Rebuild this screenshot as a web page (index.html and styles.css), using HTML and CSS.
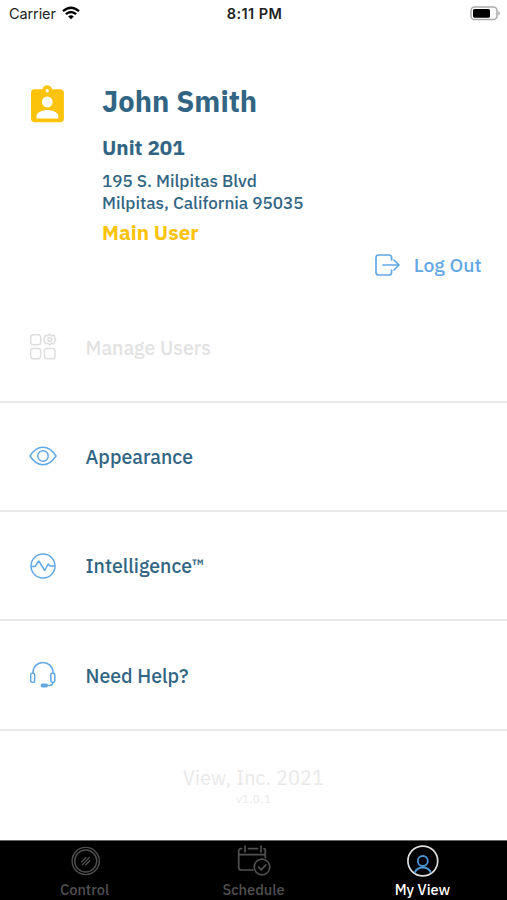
FILE: index.html
```html
<!DOCTYPE html>
<html lang="en">
<head>
<meta charset="utf-8">
<title>My View</title>
<link rel="stylesheet" href="styles.css">
</head>
<body>
<div class="app">
  <header class="status">
    <div class="carrier"><span>Carrier</span>
      <svg width="18" height="14" viewBox="0 0 18 14" fill="none" stroke="#000" stroke-width="2.4"><path d="M1 5.2Q9-1.7 17 5.2M3.900 8.200Q9 3.800 14.100 8.200"/><path d="M6.200 10.400Q9 8.100 11.800 10.400L9 13.200Z" fill="#000" stroke="none"/></svg>
    </div>
    <div class="time">8:11 PM</div>
    <svg class="battery" width="31" height="15" viewBox="0 0 31 15"><rect x="2" y="1" width="26" height="12.600" rx="3.600" fill="#fff" stroke="#aaa" stroke-width="1.500"/><rect x="4" y="3" width="17" height="8.700" rx="1.600"/><path d="M29.300 5v4.600q1.600-.8 1.600-2.300T29.300 5z" fill="#aaa"/></svg>
  </header>

  <section class="profile">
    <svg class="badge" width="33" height="38" viewBox="0 0 34 38" preserveAspectRatio="none"><path fill="#fcc30b" fill-rule="evenodd" d="M3.600 4.200h8.200C12.600 1.700 14.400.3 16.800.3s4.200 1.400 5 3.900h8.500c2 0 3.600 1.500 3.600 3.500v26c0 2-1.600 3.600-3.600 3.600H3.600c-2 0-3.600-1.600-3.600-3.600v-26c0-2 1.600-3.500 3.600-3.500zM16.800 4a1.700 1.700 0 1 0 0 3.400 1.700 1.700 0 0 0 0-3.400zM16.800 11.400a5.500 5.500 0 1 0 0 11 5.500 5.500 0 0 0 0-11zM5.700 33.400h22.400v-2.400c0-4-7.400-6-11.200-6s-11.200 2-11.200 6z"/></svg>
    <div class="details">
      <h1>John Smith</h1>
      <h2>Unit 201</h2>
      <p class="address">195 S. Milpitas Blvd<br>Milpitas, California 95035</p>
      <p class="role">Main User</p>
    </div>
  </section>
  <a class="logout">
    <svg width="26" height="22" viewBox="0 0 26 22" fill="none" stroke="#62a8e5" stroke-width="1.700" stroke-linecap="round" stroke-linejoin="round"><path d="M16.600 6V3.800Q16.600 1 13.800 1H3.800Q1 1 1 3.800v14.400Q1 21 3.800 21h10q2.800 0 2.800-2.800V16M8 11h16M19 6l5 5-5 5"/></svg>
    <span>Log Out</span>
  </a>

  <nav class="menu">
    <a class="row disabled">
      <svg class="icon" viewBox="0 0 28 28"><rect x="1.700" y="1.700" width="10" height="10" rx="2.600"/><rect x="1.700" y="15.400" width="10" height="10.300" rx="2.600"/><rect x="15.400" y="15.400" width="10.600" height="10.300" rx="2.600"/><path d="M20.700 1.100l1.800 1.700 2.500-.5.700 2.300 1 1.900-1 1.900-.7 2.300-2.500-.5-1.800 1.700-1.800-1.700-2.500.5-.7-2.300-1-1.900 1-1.900.7-2.300 2.500.5z"/><circle cx="20.700" cy="6.500" r="1.900"/></svg>
      <span>Manage Users</span>
    </a>
    <a class="row">
      <svg class="icon" viewBox="0 0 28 28"><path d="M1 14Q6.500 5.300 14 5.300T27 14Q21.500 22.700 14 22.700T1 14z"/><circle cx="14" cy="14" r="5.200"/></svg>
      <span>Appearance</span>
    </a>
    <a class="row">
      <svg class="icon" viewBox="0 0 28 28"><circle cx="14" cy="14" r="12"/><path d="M2 14.500h4l3.800-5.500 5.900 9.500 3.500-6.500 1.800 2H26"/></svg>
      <span>Intelligence™</span>
    </a>
    <a class="row">
      <svg class="icon" viewBox="0 0 28 28"><rect x="1.700" y="12.200" width="4" height="9" rx="1.500"/><rect x="21.800" y="12.200" width="4" height="9" rx="1.500"/><path d="M4 12V11.300a10 9.800 0 0 1 20 0V12M24 21.200q-.2 3.200-3.600 3.200H18"/><rect x="12.300" y="23.300" width="6" height="2.400" rx="1.200" fill="#62a8e5"/></svg>
      <span>Need Help?</span>
    </a>
  </nav>

  <footer class="about"><div class="company">View, Inc. 2021</div><div class="version">v1.0.1</div></footer>

  <nav class="tabs">
    <a class="tab">
      <svg width="34" height="34" viewBox="0 0 34 34" fill="none" stroke="#505050" stroke-width="1.400" stroke-linecap="round"><circle cx="17.700" cy="17" r="13.600"/><circle cx="17.700" cy="17" r="11"/><path d="M13.700 17.800l4.300-4.300M14.400 20.900l6.700-7.300M17.700 20.900l4-4.100"/></svg>
      <span>Control</span>
    </a>
    <a class="tab">
      <svg width="34" height="34" viewBox="0 0 34 34" fill="none" stroke="#505050" stroke-width="1.700" stroke-linecap="round" stroke-linejoin="round"><path d="M4.500 4.700H4Q1.700 4.700 1.700 7v16.500Q1.700 26 4.200 26H16M11.500 4.700h9M27 4.700Q28.300 4.700 28.300 7v6.500M1.700 10.600h26.600M8 2v5.800M24 2v5.800"/><circle cx="25" cy="23" r="7.800"/><path d="M21.500 23.200l2.700 2.600 4.600-5"/></svg>
      <span>Schedule</span>
    </a>
    <a class="tab active">
      <svg width="34" height="34" viewBox="0 0 34 34" fill="none"><circle cx="16.800" cy="17" r="14.900" stroke="#dedede" stroke-width="1.700"/><g stroke="#4d97d5" stroke-width="1.800"><circle cx="16.800" cy="17" r="5"/><path d="M8.600 28.900Q10.800 23.500 16.800 23.500t8.200 5.400"/></g></svg>
      <span>My View</span>
    </a>
  </nav>
</div>
</body>
</html>
```
FILE: styles.css
```css
* { box-sizing: border-box; }
body {
  margin: 0;
  background: #fff;
  color: #326583;
  font-family: "IBM Plex Sans", "Noto Sans", sans-serif;
}
h1, h2, p { margin: 0; }
svg { display: block; flex: none; }
.app { display: flex; flex-direction: column; height: 900px; overflow: hidden; }
.status {
  display: grid;
  grid-template-columns: 1fr auto 1fr;
  align-items: center;
  height: 28px;
  padding: 0 7px 0 9px;
  color: #222;
  font: 14.500px/28px Inter, sans-serif;
}
.carrier { display: flex; align-items: center; gap: 6px; letter-spacing: -0.1px; }
.carrier svg { margin-top: -2px; }
.time { font-weight: 600; letter-spacing: 0.4px; }
.battery { justify-self: end; margin-top: -2px; }
.profile { display: flex; height: 220px; padding: 57px 30px 0; }
.badge { margin-left: 1px; }
.details { margin-left: 38px; }
h1 { margin-top: -1px; font-size: 29.100px; line-height: 34px; }
h2 { margin-top: 16px; font-size: 20.700px; line-height: 28px; }
.address { margin-top: 8px; font-size: 17.100px; font-weight: 500; line-height: 22.400px; }
.role { margin-top: 4.200px; color: #fcc30b; font-size: 20.700px; font-weight: 700; line-height: 28px; }
.logout {
  display: flex;
  align-items: center;
  align-self: flex-end;
  gap: 13px;
  height: 34px;
  margin-right: 25.500px;
  color: #62a8e5;
  font-size: 19.400px;
  font-weight: 500;
}
.logout span { margin-top: -1px; }
.menu { margin-top: 11.500px; }
.row {
  display: flex;
  align-items: center;
  gap: 28.500px;
  height: 109.300px;
  padding-left: 29px;
  border-bottom: 2px solid #e9e9e9;
  font-size: 19.500px;
  font-weight: 500;
}
.icon { width: 28px; height: 28px; fill: none; stroke: #62a8e5; stroke-width: 1.500; stroke-linejoin: round; }
.disabled { color: #e2e2e2; }
.disabled .icon { stroke: #dedede; }
.about { flex: 1; padding-top: 34px; color: #e9e9e9; text-align: center; }
.company { font-size: 19.800px; letter-spacing: 0.15px; line-height: 26px; }
.version { font-size: 12px; line-height: 15px; letter-spacing: 0.2px; }
.tabs {
  display: grid;
  grid-template-columns: repeat(3, 1fr);
  height: 60px;
  background: #000;
  border-top: 1px solid #666;
}
.tab { display: flex; flex-direction: column; align-items: center; padding-top: 3px; color: #505050; font-size: 14.600px; font-weight: 500; line-height: 20px; }
.tab span { margin-top: 2px; }
.active { color: #fff; }
```
